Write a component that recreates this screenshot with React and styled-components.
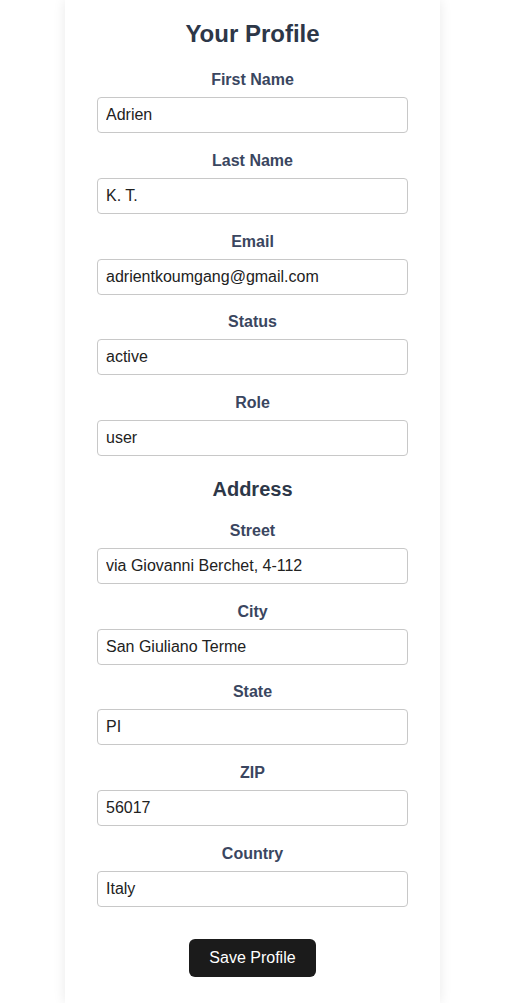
import React from 'react'
import styled, { createGlobalStyle } from 'styled-components'

const Global = createGlobalStyle`
  body {
    margin: 0;
    background: #fff;
    font-family: "Liberation Sans", Arial, sans-serif;
  }
`

const Page = styled.div`
  display: flex;
  justify-content: center;
  padding-left: 30px;
  padding-right: 40px;
`

const Card = styled.form`
  width: 375px;
  flex-shrink: 0;
  box-sizing: border-box;
  background: #fff;
  box-shadow: 0 0 12px rgba(0, 0, 0, 0.09);
  padding: 20px 32px 26px;
  display: flex;
  flex-direction: column;
  align-items: center;
`

const Title = styled.h1`
  margin: 0 0 23px;
  font-size: 24px;
  line-height: 28px;
  font-weight: bold;
  color: #2d3748;
`

const Subtitle = styled.h2`
  margin: 3px 0 21px;
  font-size: 20px;
  line-height: 23px;
  font-weight: bold;
  color: #2d3748;
`

const Field = styled.div`
  width: 100%;
  display: flex;
  flex-direction: column;
  align-items: center;
  margin-bottom: 18.75px;
`

const Label = styled.label`
  font-size: 16px;
  line-height: 18px;
  font-weight: bold;
  color: #3a4660;
  margin-bottom: 8px;
`

const Input = styled.input`
  width: 100%;
  height: 36px;
  box-sizing: border-box;
  border: 1px solid #c8c8c8;
  border-radius: 4px;
  padding: 0 8px;
  font-family: "Liberation Sans", Arial, sans-serif;
  font-size: 16px;
  color: #222;
  background: #fff;
  outline: none;
`

const Button = styled.button`
  margin-top: 13.5px;
  width: 127px;
  height: 38px;
  border: none;
  border-radius: 6px;
  background: #1b1b1b;
  color: #fff;
  font-family: "Liberation Sans", Arial, sans-serif;
  font-size: 16px;
  cursor: pointer;
`

const profile = [
  ['First Name', 'Adrien'],
  ['Last Name', 'K. T.'],
  ['Email', 'adrientkoumgang@gmail.com'],
  ['Status', 'active'],
  ['Role', 'user'],
]

const address = [
  ['Street', 'via Giovanni Berchet, 4-112'],
  ['City', 'San Giuliano Terme'],
  ['State', 'PI'],
  ['ZIP', '56017'],
  ['Country', 'Italy'],
]

function Row({ label, value }) {
  return (
    <Field>
      <Label>{label}</Label>
      <Input defaultValue={value} />
    </Field>
  )
}

export default function App() {
  return (
    <Page>
      <Global />
      <Card onSubmit={e => e.preventDefault()}>
        <Title>Your Profile</Title>
        {profile.map(([l, v]) => <Row key={l} label={l} value={v} />)}
        <Subtitle>Address</Subtitle>
        {address.map(([l, v]) => <Row key={l} label={l} value={v} />)}
        <Button type="submit">Save Profile</Button>
      </Card>
    </Page>
  )
}
